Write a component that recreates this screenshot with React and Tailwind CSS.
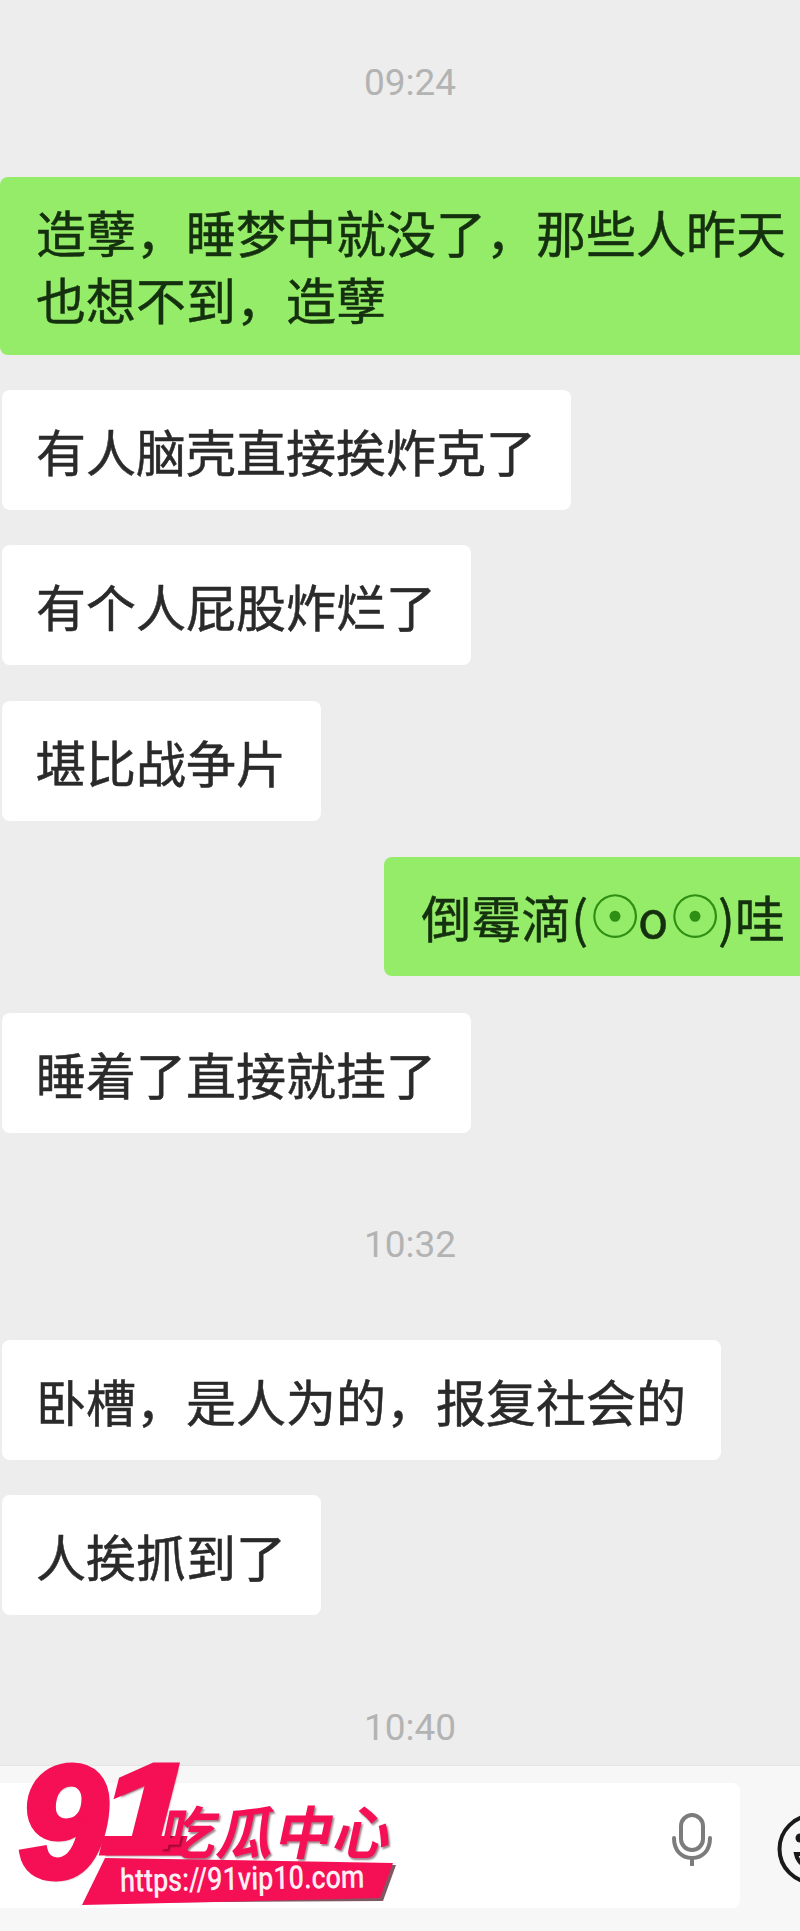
const cjk = "font-['Noto_Sans_CJK_SC','Noto_Sans',sans-serif]"
const weight = '[-webkit-text-stroke:0.5px_currentColor]'

function Time({ children, className }) {
  return (
    <div className={`pl-[20px] text-center font-['Roboto',sans-serif] text-[37px] leading-[40px] text-[#b3b3b3] ${className}`}>
      {children}
    </div>
  )
}

function Left({ children, className }) {
  return (
    <div className={`ml-[2px] flex h-[120px] items-center self-start rounded-lg bg-white pl-[34px] pr-[35px] text-[50px] text-[#2a2a2a] ${weight} ${className}`}>
      {children}
    </div>
  )
}

function Dot() {
  return <span className="font-['DejaVu_Sans',sans-serif] text-[60px] leading-none tracking-[-4px] text-[#2f8f14] [-webkit-text-stroke:0px]">☉</span>
}

function Logo() {
  return (
    <div className="absolute left-0 top-[1750px] h-[165px] w-[410px]">
      <div className="absolute left-[19px] top-[-20px] font-['Liberation_Sans',sans-serif] text-[158px] font-bold italic leading-[182px] text-[#f50f55] [-webkit-text-stroke:7px_#f50f55] [text-shadow:2px_3px_2px_rgba(60,0,20,0.6)]">
        9
      </div>
      <div className="absolute left-[100px] top-[6px] origin-left scale-x-[1.3] font-['Liberation_Sans',sans-serif] text-[128px] font-bold italic leading-[106px] text-[#f50f55] [-webkit-text-stroke:5px_#f50f55] [text-shadow:2px_3px_2px_rgba(60,0,20,0.6)]">
        1
      </div>
      <div className={`absolute left-[162px] top-[52px] -skew-x-12 whitespace-nowrap text-[57px] font-bold leading-[54px] tracking-[1px] text-[#f50f55] [text-shadow:2px_2px_2px_rgba(60,0,20,0.5)] ${cjk}`}>
        吃瓜中心
      </div>
      <svg className="absolute left-[78px] top-[104px]" width="320" height="56" viewBox="0 0 320 56">
        <polygon points="7,49 30,6 318,11 305,47" fill="#4a1020" opacity="0.7" />
        <polygon points="4,51 27,4 315,9 302,44" fill="#f50f55" />
      </svg>
      <div className="absolute left-[120px] top-[117px] origin-left -rotate-1 scale-y-[1.2] whitespace-nowrap font-['Roboto',sans-serif] text-[27px] font-medium leading-[28px] text-[#ffeef3]">
        https://91vip10.com
      </div>
    </div>
  )
}

export default function App() {
  return (
    <div className={`relative flex h-[1931px] w-[800px] flex-col overflow-hidden bg-[#ededed] ${cjk}`}>
      <Time className="mt-[63px]">09:24</Time>
      <div className={`mt-[74px] h-[178px] rounded-l-lg bg-[#95ec69] pl-[36px] pt-[21px] text-[50px] leading-[67px] text-[#14300f] ${weight}`}>
        造孽，睡梦中就没了，那些人昨天
        <br />
        也想不到，造孽
      </div>
      <div className="mt-[35px] flex flex-col">
        <Left>有人脑壳直接挨炸克了</Left>
        <Left className="mt-[35px]">有个人屁股炸烂了</Left>
        <Left className="mt-[36px]">堪比战争片</Left>
        <div className={`mt-[36px] flex h-[119px] items-center self-end rounded-l-lg bg-[#95ec69] pl-[37px] pr-[15px] text-[50px] text-[#14300f] ${weight}`}>
          <span className="whitespace-nowrap">
            倒霉滴(<Dot />o<Dot />)哇
          </span>
        </div>
        <Left className="mt-[37px]">睡着了直接就挂了</Left>
      </div>
      <Time className="mt-[92px]">10:32</Time>
      <Left className="mt-[75px]">卧槽，是人为的，报复社会的</Left>
      <Left className="mt-[35px]">人挨抓到了</Left>
      <Time className="mt-[93px]">10:40</Time>
      <div className="mt-[17px] flex flex-1 items-start border-t border-[#e4e4e4] bg-[#f7f7f7] pt-[17px]">
        <div className="flex h-[125px] w-[740px] shrink-0 items-center justify-end rounded-r-lg bg-white pb-[12px] pr-[28px]">
          <svg width="40" height="53" viewBox="0 0 40 53" fill="none" stroke="#7c7c7c" strokeWidth="4" strokeLinecap="round">
            <rect x="9" y="2" width="22" height="35" rx="11" />
            <path d="M2 25c0 12 7 20 18 20s18-8 18-20" />
            <path d="M20 45v7" />
          </svg>
        </div>
        <svg className="ml-[37px] mt-[30px] shrink-0" width="72" height="72" viewBox="0 0 72 72" fill="none" stroke="#1a1a1a" strokeWidth="4" strokeLinecap="round">
          <circle cx="36" cy="36" r="33.5" />
          <circle cx="23" cy="25" r="4.5" fill="#1a1a1a" stroke="none" />
          <circle cx="49" cy="25" r="4.5" fill="#1a1a1a" stroke="none" />
          <path d="M19 41h34c-2 9-9 14-17 14s-15-5-17-14z" />
        </svg>
      </div>
      <Logo />
    </div>
  )
}
